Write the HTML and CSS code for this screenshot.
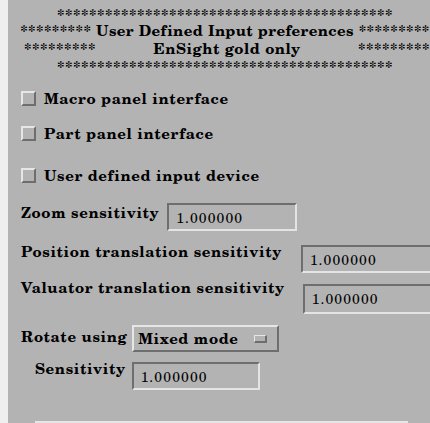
FILE: index.html
```html
<!DOCTYPE html>
<html>
<head>
<meta charset="utf-8">
<link rel="stylesheet" href="styles.css">
</head>
<body>
<div class="panel">
  <div class="hdr">
    <div class="hl l1">******************************************</div>
    <div class="hl l2">********* User Defined Input preferences *********</div>
    <div class="hl l3"><span>*********</span><span>EnSight gold only</span><span>*********</span></div>
    <div class="hl l4">******************************************</div>
  </div>

  <div class="cb r1"><span class="box"></span><span class="lbl">Macro panel interface</span></div>
  <div class="cb r2"><span class="box"></span><span class="lbl">Part panel interface</span></div>
  <div class="cb r3"><span class="box"></span><span class="lbl">User defined input device</span></div>

  <div class="frow zoom"><span class="flabel">Zoom sensitivity</span><span class="field">1.000000</span></div>
  <div class="frow pos"><span class="flabel">Position translation sensitivity</span><span class="field">1.000000</span></div>
  <div class="frow val"><span class="flabel">Valuator translation sensitivity</span><span class="field">1.000000</span></div>
  <div class="frow rot"><span class="flabel">Rotate using</span><span class="opt">Mixed mode<span class="ind"></span></span></div>
  <div class="frow sens"><span class="flabel">Sensitivity</span><span class="field">1.000000</span></div>

  <div class="bottom"></div>
</div>
</body>
</html>
```

FILE: styles.css
```css
html, body {
  margin: 0;
  padding: 0;
}
body {
  background: #b3b3b3;
  border-left: 8px solid #efefef;
  height: 423px;
  overflow: hidden;
  font-family: "TeX Gyre Schola", "DejaVu Serif", serif;
  font-weight: bold;
  font-size: 15px;
  letter-spacing: 0.6px;
  color: #000;
}
.panel {
  width: 434px;
  padding-top: 4px;
}
.hdr {
  height: 84px;
  letter-spacing: 0.5px;
}
.hl {
  text-align: center;
  white-space: pre;
  line-height: 17px;
}
.l1 { height: 14px; padding-top: 3px; line-height: 14px; }
.l2 { height: 19px; line-height: 19px; letter-spacing: 0.4px; }
.l3 {
  height: 19px;
  display: flex;
  justify-content: space-between;
  padding: 0 12px 0 16px;
}
.l4 { height: 15px; line-height: 15px; }

.cb {
  display: flex;
  align-items: center;
  height: 20px;
  padding-left: 13px;
}
.r2 { margin-top: 15px; }
.r3 { margin-top: 22px; }
.box {
  box-sizing: border-box;
  width: 15px;
  height: 15px;
  border-style: solid;
  border-width: 2px;
  border-color: #e6e6e6 #6e6e6e #6e6e6e #e6e6e6;
  margin-right: 8px;
}
.lbl {
  line-height: 17px;
}

.frow {
  display: flex;
  align-items: flex-start;
  padding-left: 13px;
}
.flabel {
  line-height: 17px;
  white-space: nowrap;
}
.field {
  box-sizing: border-box;
  flex: none;
  height: 28px;
  padding: 4px 0 0 7px;
  border-style: solid;
  border-width: 2px;
  border-color: #6e6e6e #e4e4e4 #e4e4e4 #6e6e6e;
  font-weight: normal;
  font-size: 14px;
  letter-spacing: 1.1px;
  line-height: 17px;
}
.zoom { margin-top: 18px; }
.zoom .flabel { margin-top: 1px; }
.zoom .field { width: 130px; margin-left: 8px; }

.pos { margin-top: 12px; }
.pos .field { width: 140px; margin-left: 19px; margin-top: 2px; }

.val { margin-top: 6px; }
.val .field { width: 140px; margin-left: 18px; margin-top: 5px; height: 30px; }

.rot { margin-top: 11px; }
.rot .flabel { margin-top: 3px; }
.opt {
  box-sizing: border-box;
  display: flex;
  align-items: center;
  width: 147px;
  height: 27px;
  margin-left: 5px;
  padding: 0 0 0 4px;
  border-style: solid;
  border-width: 2px;
  border-color: #e6e6e6 #6e6e6e #6e6e6e #e6e6e6;
  line-height: 17px;
}
.ind {
  box-sizing: border-box;
  width: 13px;
  height: 8px;
  margin-left: auto;
  margin-right: 10px;
  border-style: solid;
  border-width: 1px 2px 2px 1px;
  border-color: #e6e6e6 #6e6e6e #6e6e6e #e6e6e6;
}

.sens { margin-top: 8px; padding-left: 27px; }
.sens .field { width: 128px; margin-left: 6px; margin-top: 2px; }

.bottom {
  margin: 31px 0 0 27px;
  width: 373px;
  height: 20px;
  border-top: 2px solid #e6e6e6;
}
```
